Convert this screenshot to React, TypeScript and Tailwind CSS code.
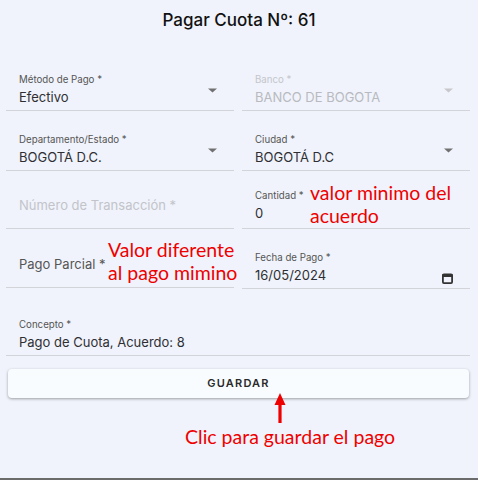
import type { ReactNode } from "react";

const ui = "font-['Inter','Roboto',sans-serif]";
const note = "font-['Lato','Open_Sans',sans-serif] text-[19.5px] leading-[23px] text-[#ee0000]";

function Caret({ muted = false }: { muted?: boolean }) {
    return (
        <svg width="9" height="5" viewBox="0 0 9 5" className="absolute right-[17px] top-[16px]">
            <path d="M0 0.5h9L4.5 4.5z" fill={muted ? "#c8c8cc" : "#707070"} />
        </svg>
    );
}

function Field({
    label,
    value,
    muted = false,
    caret = false,
    children,
    className = "",
}: {
    label?: string;
    value: string;
    muted?: boolean;
    caret?: boolean;
    children?: ReactNode;
    className?: string;
}) {
    return (
        <div className={`relative h-[39px] border-b border-[#d2d4d9] pl-[13px] flex flex-col justify-end pb-[4px] ${className}`}>
            {label && (
                <span className={`text-[9.7px] leading-[12px] mb-[3px] ${muted ? "text-[#c4c6cc]" : "text-[#555]"}`}>
                    {label}
                </span>
            )}
            <span className={`text-[13px] leading-[17px] ${muted ? "text-[#b8bac0]" : "text-[#2f2f33]"}`}>
                {value}
            </span>
            {caret && <Caret muted={muted} />}
            {children}
        </div>
    );
}

function Placeholder({ text, dark = false }: { text: string; dark?: boolean }) {
    return (
        <div className="h-[39px] border-b border-[#d2d4d9] pl-[13px] flex items-end pb-[14px]">
            <span className={`text-[13px] leading-[17px] ${dark ? "text-[#555]" : "text-[#c2c4ca]"}`}>{text}</span>
        </div>
    );
}

export default function App() {
    return (
        <div className={`relative w-[478px] h-[480px] bg-[#f0f3fb] border-b-2 border-[#6b6b6b] ${ui}`}>
            <h1 className="pt-[9px] text-center text-[17px] leading-[22px] font-medium text-[#111]">
                Pagar Cuota Nº: 61
            </h1>

            <div className="px-[6px] pr-[8px] mt-[41px]">
                <div className="grid grid-cols-2 gap-x-[8px]">
                    <Field label="Método de Pago *" value="Efectivo" caret />
                    <Field label="Banco *" value="BANCO DE BOGOTA" muted caret />
                </div>
                <div className="grid grid-cols-2 gap-x-[8px] mt-[21px]">
                    <Field label="Departamento/Estado *" value="BOGOTÁ D.C." caret />
                    <Field label="Ciudad *" value="BOGOTÁ D.C" caret />
                </div>
                <div className="grid grid-cols-2 gap-x-[8px] mt-[19px]">
                    <Placeholder text="Número de Transacción *" />
                    <Field label="Cantidad *" value="0" className="pb-[6px]" />
                </div>
                <div className="grid grid-cols-2 gap-x-[8px] mt-[20px]">
                    <Placeholder text="Pago Parcial *" dark />
                    <Field label="Fecha de Pago *" value="16/05/2024" className="translate-y-[1px]">
                        <svg width="11" height="11" viewBox="0 0 11 11" className="absolute right-[17px] top-[23px]">
                            <rect x="0.9" y="1.4" width="9.2" height="8.7" rx="1" fill="none" stroke="#333" strokeWidth="1.8" />
                            <rect x="0.5" y="1" width="10" height="3" fill="#333" />
                        </svg>
                    </Field>
                </div>
                <Field label="Concepto *" value="Pago de Cuota, Acuerdo: 8" className="mt-[29px]" />

                <button
                    type="button"
                    className="mt-[13px] ml-[2px] w-[461px] h-[29px] rounded-[4px] bg-[#f8fcff] shadow-[0_1px_3px_rgba(0,0,0,0.35)] text-[11px] font-semibold tracking-[1.2px] text-[#2a2a2a]"
                >
                    GUARDAR
                </button>
            </div>

            <div className={`absolute left-[310px] top-[181px] ${note}`}>
                valor minimo del
                <br />
                acuerdo
            </div>
            <div className={`absolute left-[108px] top-[238px] ${note}`}>
                Valor diferente
                <br />
                al pago mimino
            </div>

            <svg width="12" height="30" viewBox="0 0 12 30" className="absolute left-[274px] top-[393px]">
                <path d="M6 0L11.5 12H7.6V30H4.4V12H0.5z" fill="#ee0000" />
            </svg>

            <div className={`absolute left-[185px] top-[425px] ${note}`}>Clic para guardar el pago</div>
        </div>
    );
}
